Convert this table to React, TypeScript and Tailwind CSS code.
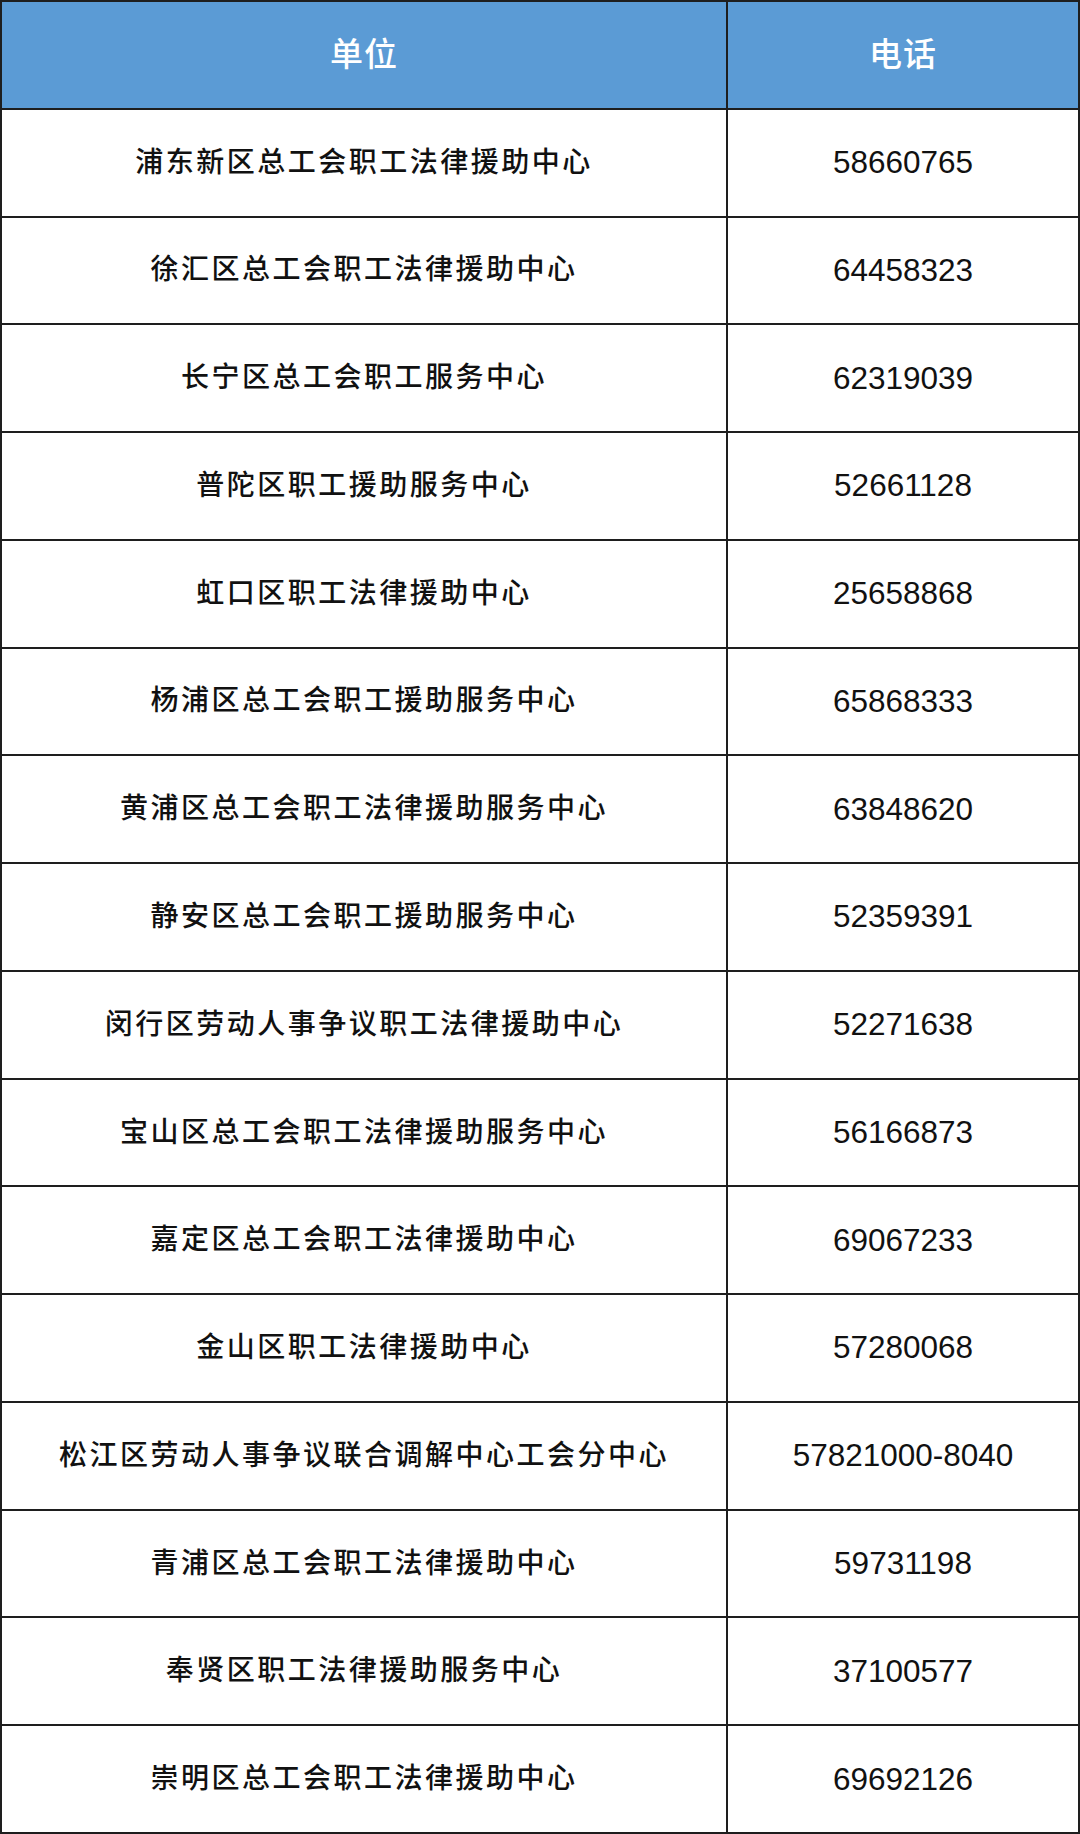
const rows: [string, string][] = [
  ['浦东新区总工会职工法律援助中心', '58660765'],
  ['徐汇区总工会职工法律援助中心', '64458323'],
  ['长宁区总工会职工服务中心', '62319039'],
  ['普陀区职工援助服务中心', '52661128'],
  ['虹口区职工法律援助中心', '25658868'],
  ['杨浦区总工会职工援助服务中心', '65868333'],
  ['黄浦区总工会职工法律援助服务中心', '63848620'],
  ['静安区总工会职工援助服务中心', '52359391'],
  ['闵行区劳动人事争议职工法律援助中心', '52271638'],
  ['宝山区总工会职工法律援助服务中心', '56166873'],
  ['嘉定区总工会职工法律援助中心', '69067233'],
  ['金山区职工法律援助中心', '57280068'],
  ['松江区劳动人事争议联合调解中心工会分中心', '57821000-8040'],
  ['青浦区总工会职工法律援助中心', '59731198'],
  ['奉贤区职工法律援助服务中心', '37100577'],
  ['崇明区总工会职工法律援助中心', '69692126'],
];

export default function App() {
  return (
    <div className="w-[1080px] h-[1834px] bg-white font-['Liberation_Sans','Noto_Sans_CJK_SC',sans-serif]">
      <div className="h-full flex flex-col border-2 border-[#1e1e1e]">
        {/* 表头 */}
        <div className="flex-1 flex bg-[#5b9bd5] text-white text-[33px] font-medium border-b-2 border-[#1e1e1e]">
          <div className="w-[726px] flex items-center justify-center border-r-2 border-[#1e1e1e] tracking-[1px]">
            单位
          </div>
          <div className="flex-1 flex items-center justify-center tracking-[1px]">电话</div>
        </div>

        {rows.map(([unit, phone], i) => (
          <div
            key={unit}
            className={`flex-1 flex text-[#111] ${i < rows.length - 1 ? 'border-b-2 border-[#1e1e1e]' : ''}`}
          >
            <div className="w-[726px] flex items-center justify-center border-r-2 border-[#1e1e1e] text-[28px] font-medium tracking-[2.5px]">
              {unit}
            </div>
            <div className="flex-1 flex items-center justify-center text-[31.5px]">{phone}</div>
          </div>
        ))}
      </div>
    </div>
  );
}
